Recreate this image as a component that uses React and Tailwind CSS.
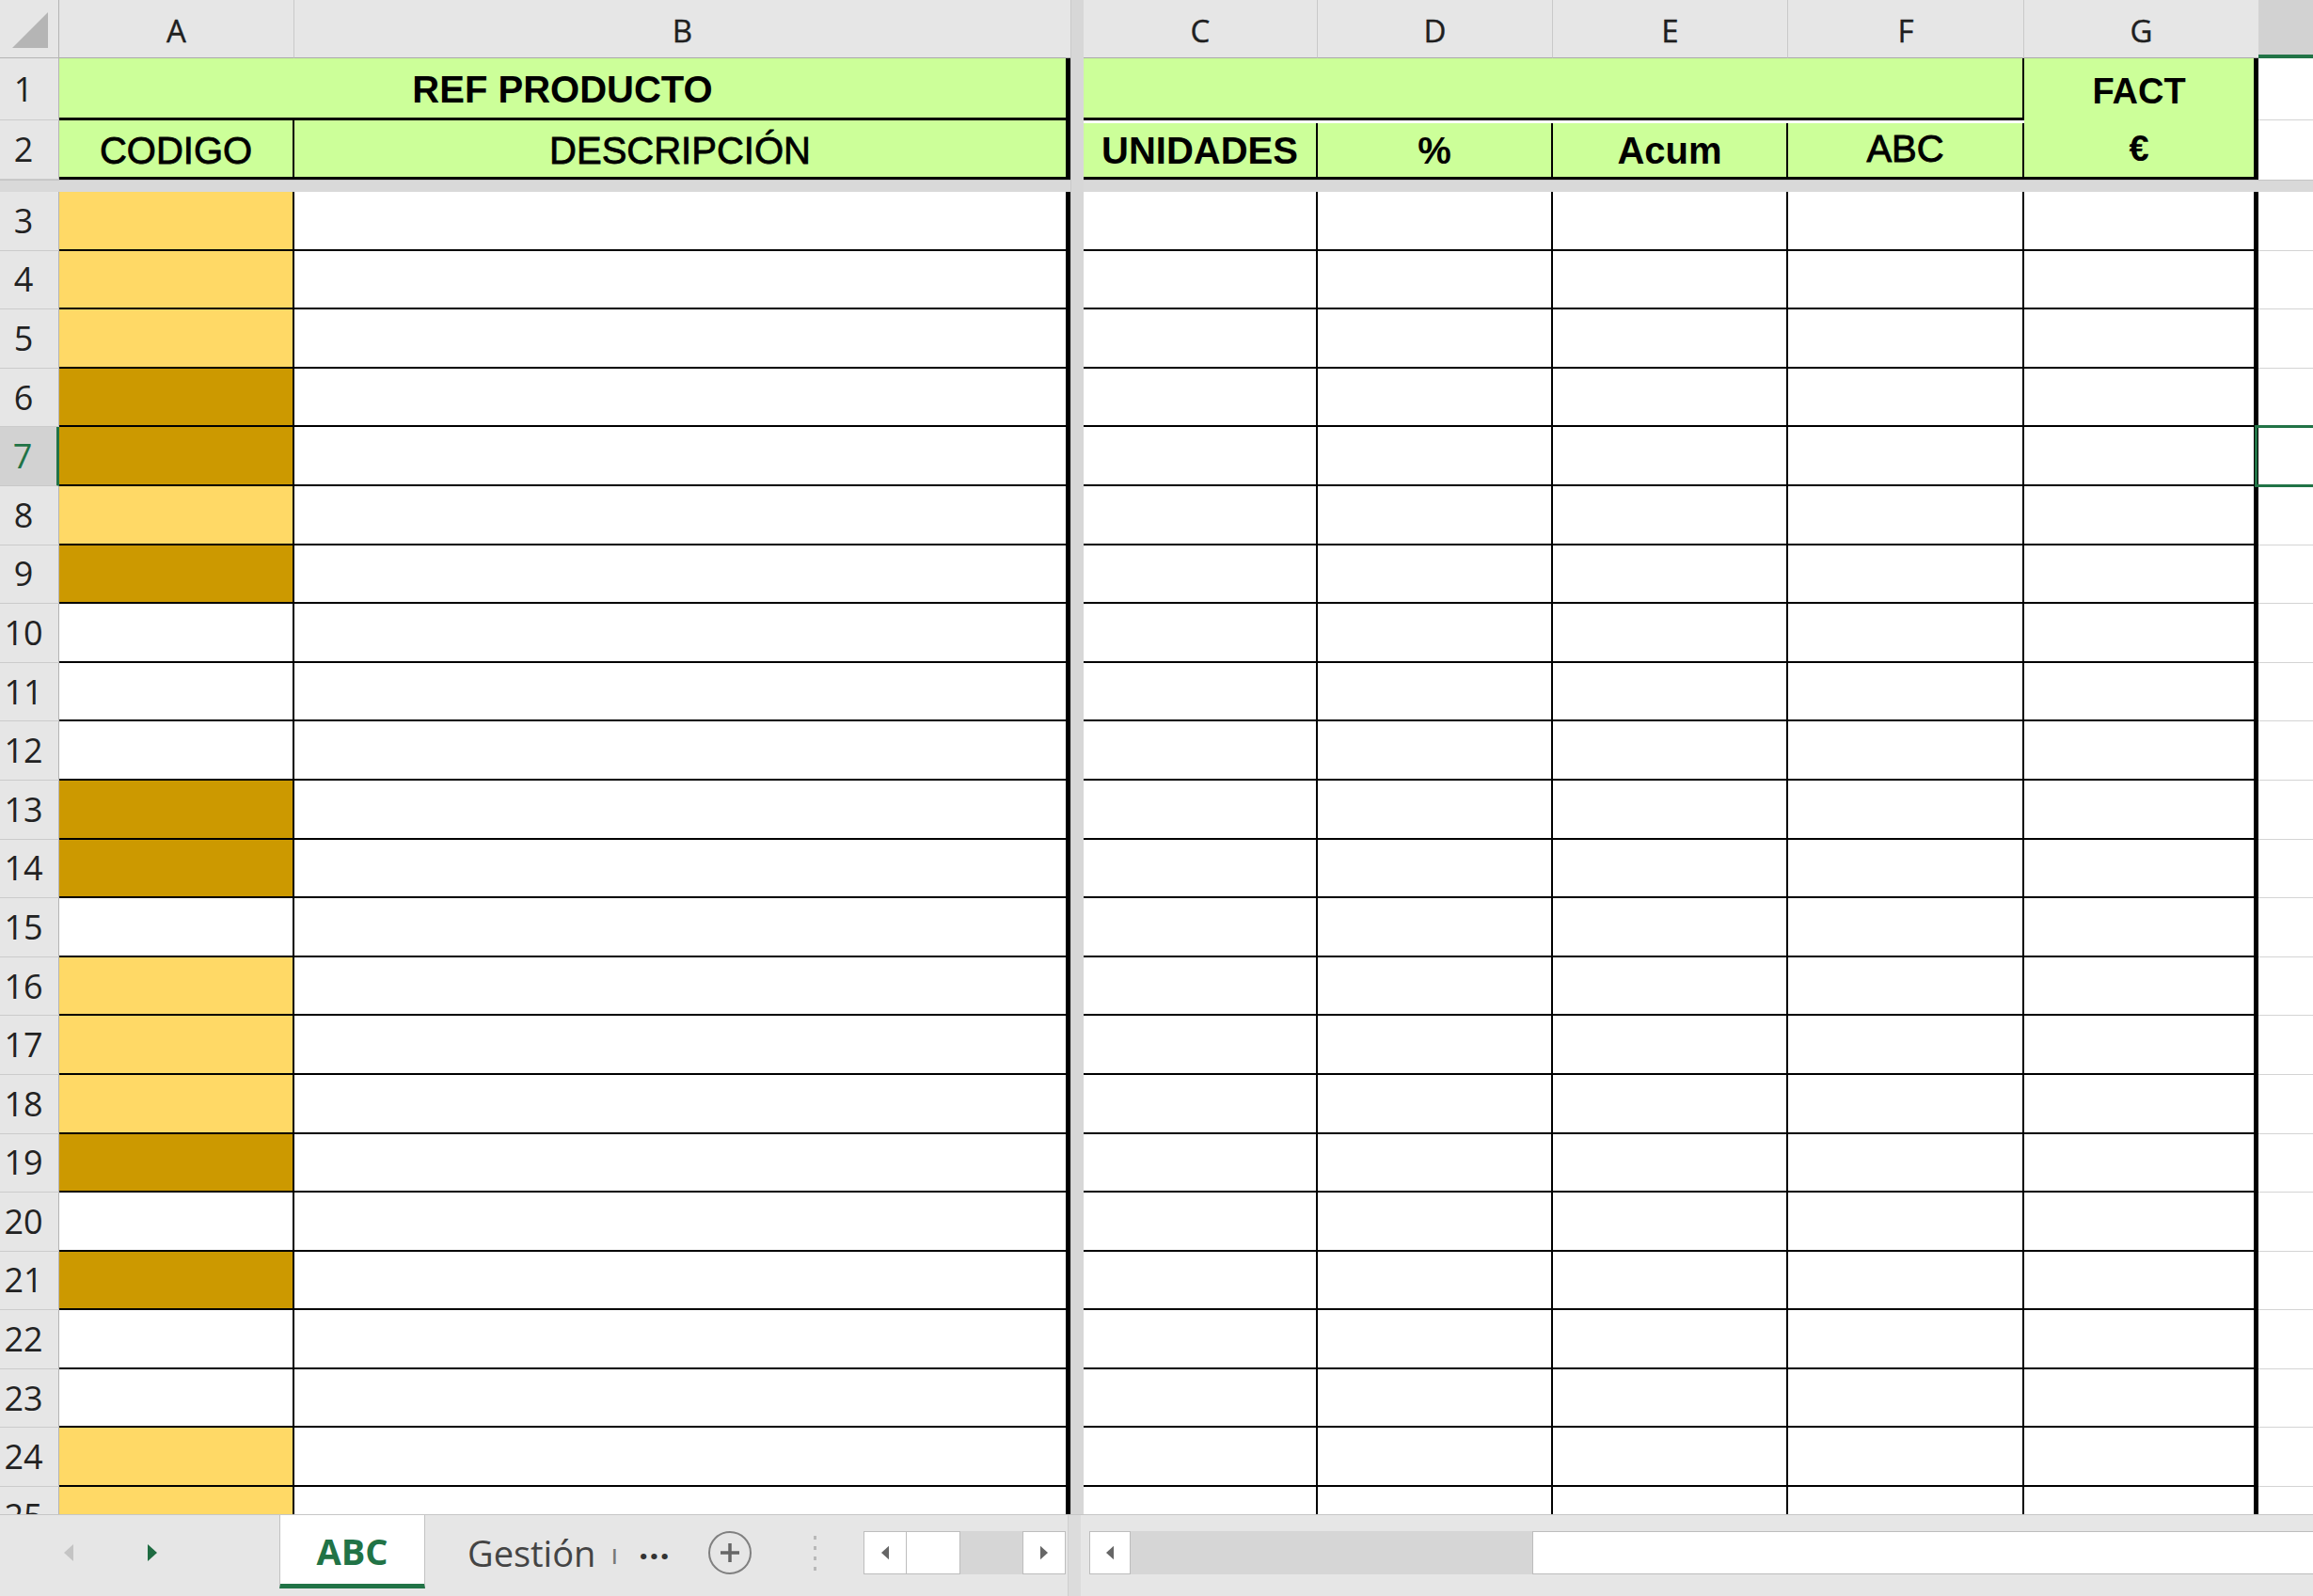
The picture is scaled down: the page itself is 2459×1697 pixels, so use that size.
import React from 'react';

// color of column A per row (L = light gold, D = dark gold, W = white)
const rows = [
  [3, 'L'], [4, 'L'], [5, 'L'], [6, 'D'], [7, 'D'], [8, 'L'], [9, 'D'], [10, 'W'],
  [11, 'W'], [12, 'W'], [13, 'D'], [14, 'D'], [15, 'W'], [16, 'L'], [17, 'L'], [18, 'L'],
  [19, 'D'], [20, 'W'], [21, 'D'], [22, 'W'], [23, 'W'], [24, 'L'], [25, 'L'],
];

const fills = { L: 'bg-[#ffd966]', D: 'bg-[#cc9900]', W: 'bg-white' };

const RowHeader = ({ n, active }) => (
  <div
    className={`flex h-full w-[63px] shrink-0 items-center justify-center pr-[12px] font-['Open_Sans',sans-serif] text-[36px] border-b ${
      active
        ? 'bg-[#d2d2d2] text-[#217346] border-r-[3px] border-r-[#217346] border-b-[#c8c8c8]'
        : 'bg-[#e6e6e6] text-[#222] border-r border-r-[#b4b4b4] border-b-[#cbcbcb]'
    }`}
  >
    {n}
  </div>
);

const ColHeader = ({ label, className = '' }) => (
  <div
    className={`flex h-full items-center justify-center bg-[#e6e6e6] pt-[4px] font-['Open_Sans',sans-serif] text-[33px] text-[#1f1f1f] [-webkit-text-stroke:0.4px_#1f1f1f] border-b border-b-[#a9a9a9] border-r border-r-[#c9c9c9] ${className}`}
  >
    {label}
  </div>
);

const Arrow = ({ dir, color, w = 10, h = 18 }) => (
  <svg width={w} height={h} viewBox="0 0 10 18">
    {dir === 'left' ? (
      <polygon points="10,0 0,9 10,18" fill={color} />
    ) : (
      <polygon points="0,0 10,9 0,18" fill={color} />
    )}
  </svg>
);

const App = () => {
  return (
    <div className="flex h-[1697px] w-[2459px] flex-col overflow-hidden bg-white font-['Liberation_Sans',Arial,sans-serif] text-black">
      {/* sheet area */}
      <div className="flex h-[1610px] overflow-hidden">
        {/* left frozen pane: row headers, A, B */}
        <div className="flex w-[1138px] shrink-0 flex-col">
          <div className="flex h-[62px] shrink-0">
            <div className="flex h-full w-[63px] shrink-0 items-end justify-end bg-[#e6e6e6] pb-[10px] pr-[11px] border-r border-b border-[#b4b4b4]">
              <svg width="38" height="38" viewBox="0 0 38 38">
                <polygon points="0,38 38,38 38,0" fill="#b5b5b5" />
              </svg>
            </div>
            <ColHeader label="A" className="w-[250px] shrink-0" />
            <ColHeader label="B" className="flex-1 border-r-0" />
          </div>

          <div className="flex h-[66px] shrink-0">
            <RowHeader n={1} />
            <div className="flex flex-1 items-center justify-center bg-[#ccff99] pt-[2px] text-[40px] font-bold border-b-[3px] border-r-[5px] border-black">
              REF PRODUCTO
            </div>
          </div>

          <div className="flex h-[63px] shrink-0">
            <RowHeader n={2} />
            <div className="flex w-[250px] shrink-0 items-center justify-center bg-[#ccff99] pt-[3px] text-[40px] [-webkit-text-stroke:0.8px_black] border-b-[3px] border-r-2 border-black">
              CODIGO
            </div>
            <div className="flex flex-1 items-center justify-center bg-[#ccff99] pt-[3px] text-[40px] [-webkit-text-stroke:0.8px_black] border-b-[3px] border-r-[5px] border-black">
              DESCRIPCIÓN
            </div>
          </div>

          <div className="h-[13px] shrink-0 bg-[#d9d9d9] border-t border-[#c4c4c4]" />

          {rows.map(([n, c]) => (
            <div key={n} className="flex h-[62.6px] shrink-0">
              <RowHeader n={n} active={n === 7} />
              <div className={`w-[250px] shrink-0 border-b-2 border-r-2 border-black ${fills[c]}`} />
              <div className="flex-1 bg-white border-b-2 border-r-[5px] border-black" />
            </div>
          ))}
        </div>

        {/* vertical split bar */}
        <div className="w-[14px] shrink-0 bg-[#d7d7d7] border-l border-[#c9c9c9]" />

        {/* right pane: C..H */}
        <div className="flex flex-1 flex-col">
          <div className="flex h-[62px] shrink-0">
            <ColHeader label="C" className="w-[249px] shrink-0" />
            <ColHeader label="D" className="w-[250px] shrink-0" />
            <ColHeader label="E" className="w-[250px] shrink-0" />
            <ColHeader label="F" className="w-[251px] shrink-0" />
            <ColHeader label="G" className="w-[249px] shrink-0 border-r-0" />
            <div className="flex-1 bg-[#d2d2d2] border-b-[4px] border-[#217346]" />
          </div>

          <div className="flex h-[129px] shrink-0">
            <div className="flex w-[1000px] shrink-0 flex-col">
              <div className="h-[66px] bg-[#ccff99] border-b-[3px] border-r-2 border-black" />
              <div className="flex h-[63px] pt-[3px] text-[40px]">
                <div className="flex w-[249px] items-center justify-center bg-[#ccff99] font-bold border-b-[3px] border-r-2 border-black">
                  UNIDADES
                </div>
                <div className="flex w-[250px] items-center justify-center bg-[#ccff99] font-bold border-b-[3px] border-r-2 border-black">
                  %
                </div>
                <div className="flex w-[250px] items-center justify-center bg-[#ccff99] font-bold border-b-[3px] border-r-2 border-black">
                  Acum
                </div>
                <div className="flex w-[251px] items-center justify-center bg-[#ccff99] pb-[4px] [-webkit-text-stroke:0.9px_black] border-b-[3px] border-r-2 border-black">
                  ABC
                </div>
              </div>
            </div>
            <div className="flex w-[249px] shrink-0 flex-col bg-[#ccff99] text-[38px] font-bold border-b-[3px] border-r-[5px] border-black">
              <div className="flex h-[64px] items-center justify-center pt-[6px]">FACT</div>
              <div className="flex flex-1 items-center justify-center pt-[2px]">€</div>
            </div>
            <div className="flex flex-1 flex-col">
              <div className="h-[66px] border-b border-[#d4d4d4]" />
              <div className="flex-1" />
            </div>
          </div>

          <div className="h-[13px] shrink-0 bg-[#d9d9d9] border-t border-[#c4c4c4]" />

          {rows.map(([n]) => (
            <div key={n} className="flex h-[62.6px] shrink-0">
              <div className="w-[249px] shrink-0 border-b-2 border-r-2 border-black" />
              <div className="w-[250px] shrink-0 border-b-2 border-r-2 border-black" />
              <div className="w-[250px] shrink-0 border-b-2 border-r-2 border-black" />
              <div className="w-[251px] shrink-0 border-b-2 border-r-2 border-black" />
              <div className="w-[249px] shrink-0 border-b-2 border-r-[5px] border-black" />
              <div className="relative flex-1 border-b border-[#d4d4d4]">
                {n === 7 && (
                  <div className="absolute -left-[4px] -top-[2px] bottom-[-2px] right-[-4px] border-[3px] border-[#217346]" />
                )}
              </div>
            </div>
          ))}
        </div>
      </div>

      {/* sheet tabs bar */}
      <div className="flex h-[87px] shrink-0 items-start bg-[#e6e6e6] border-t border-[#c6c6c6] font-['Open_Sans',sans-serif]">
        <div className="flex h-[80px] w-[297px] shrink-0 items-center">
          <div className="ml-[68px]">
            <Arrow dir="left" color="#c4c4c4" />
          </div>
          <div className="ml-[79px]">
            <Arrow dir="right" color="#1e6b41" />
          </div>
        </div>

        <div className="flex h-[78px] w-[155px] shrink-0 items-center justify-center bg-white pt-[4px] text-[38px] font-bold text-[#217346] border-x border-[#c2c2c2] border-b-[5px] border-b-[#217346]">
          ABC
        </div>

        <div className="flex h-[80px] items-center">
          <span className="ml-[45px] text-[38px] text-[#444]">Gestión</span>
          <span className="ml-[16px] text-[30px] text-[#777]">ı</span>
          <span className="ml-[22px] pb-[12px] text-[36px] font-bold tracking-[1px] text-[#333]">...</span>
          <div className="ml-[40px] flex h-[46px] w-[46px] items-center justify-center rounded-full border-2 border-[#808080]">
            <svg width="24" height="24" viewBox="0 0 24 24">
              <path d="M12 2v20M2 12h20" stroke="#666" strokeWidth="3.5" />
            </svg>
          </div>
          <div className="ml-[66px] flex flex-col gap-[7px]">
            <span className="h-[4px] w-[3px] bg-[#b8b8b8]" />
            <span className="h-[4px] w-[3px] bg-[#b8b8b8]" />
            <span className="h-[4px] w-[3px] bg-[#b8b8b8]" />
            <span className="h-[4px] w-[3px] bg-[#b8b8b8]" />
          </div>
          {/* tab scroller */}
          <div className="ml-[50px] flex h-[46px] w-[215px] items-stretch">
            <div className="flex w-[46px] items-center justify-center bg-white border border-[#bdbdbd]">
              <Arrow dir="left" color="#666" w={8} h={16} />
            </div>
            <div className="w-[57px] bg-white border-y border-r border-[#bdbdbd]" />
            <div className="flex-1 bg-[#d6d6d6]" />
            <div className="flex w-[46px] items-center justify-center bg-white border border-[#bdbdbd]">
              <Arrow dir="right" color="#666" w={8} h={16} />
            </div>
          </div>
        </div>

        <div className="ml-[2px] h-full w-[14px] shrink-0 bg-[#dcdcdc] border-l border-[#cfcfcf]" />

        {/* horizontal scrollbar */}
        <div className="flex h-[80px] flex-1 items-center pl-[9px]">
          <div className="flex h-[46px] flex-1 items-stretch">
            <div className="flex w-[44px] items-center justify-center bg-white border border-[#bdbdbd]">
              <Arrow dir="left" color="#666" w={8} h={16} />
            </div>
            <div className="w-[427px] bg-[#d6d6d6]" />
            <div className="flex-1 bg-white border-y border-l border-[#bdbdbd]" />
          </div>
        </div>
      </div>
    </div>
  );
};

export default App;
